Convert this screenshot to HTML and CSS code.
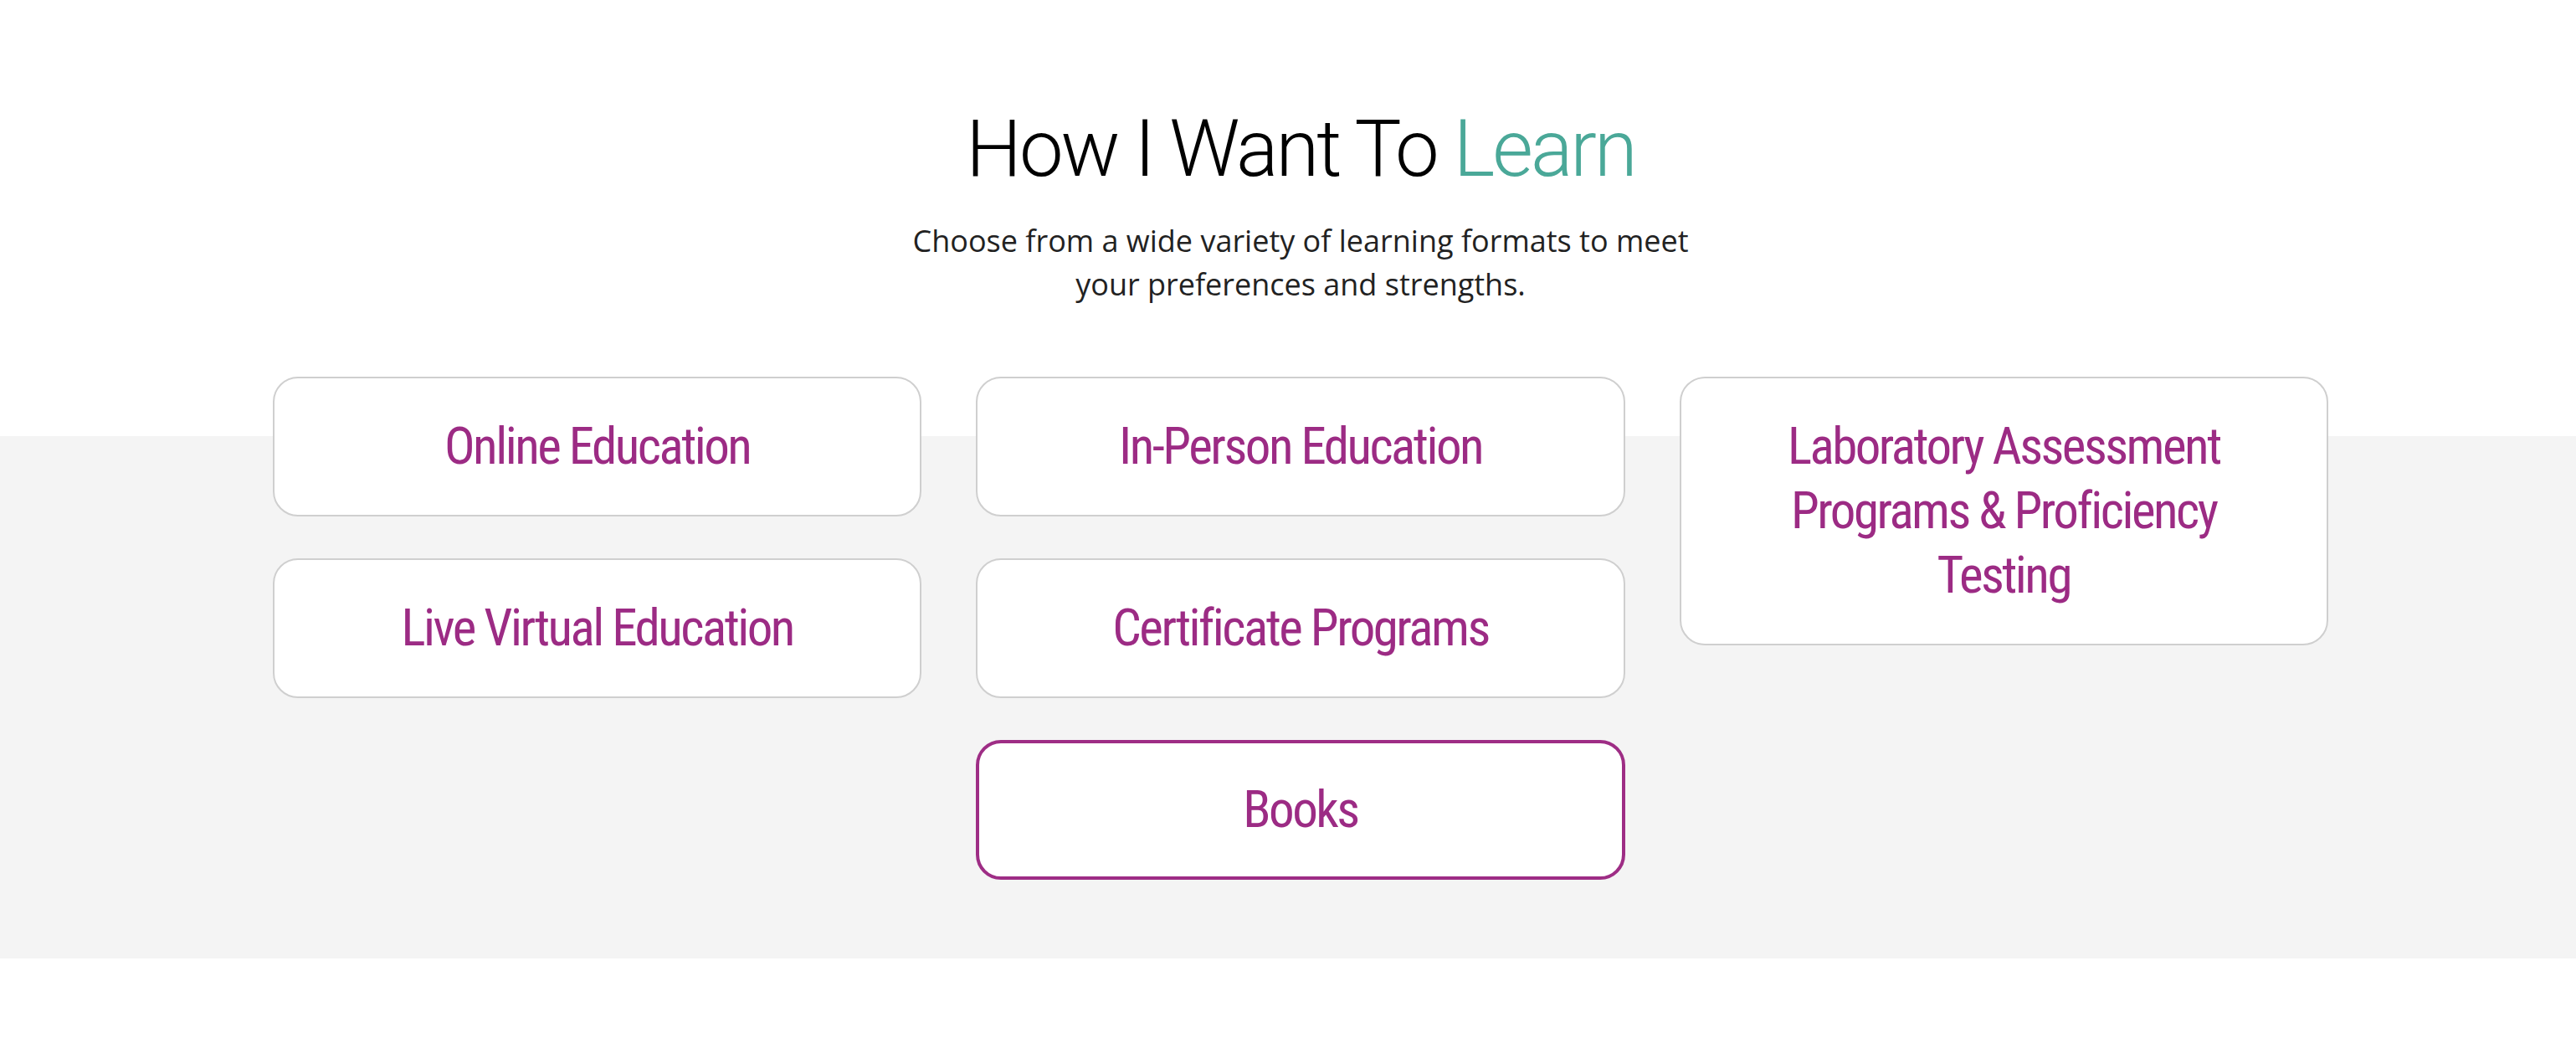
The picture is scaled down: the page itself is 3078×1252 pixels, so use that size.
FILE: index.html
```html
<!DOCTYPE html>
<html lang="en">
<head>
	<meta charset="UTF-8">
	<title>How I Want To Learn</title>
	<link rel="stylesheet" href="styles.css">
</head>
<body>
	<div id="learn">
		<div class="head">
			<h2 class="title">How I Want To <span>Learn</span></h2>
			<p class="intro">Choose from a wide variety of learning formats to meet<br>your preferences and strengths.</p>
		</div>
		<div class="band">
			<div class="grid">
				<div class="col">
					<a class="card" href="#">Online Education</a>
					<a class="card" href="#">Live Virtual Education</a>
				</div>
				<div class="col">
					<a class="card" href="#">In-Person Education</a>
					<a class="card" href="#">Certificate Programs</a>
					<a class="card active" href="#">Books</a>
				</div>
				<div class="col">
					<a class="card" href="#">Laboratory Assessment Programs &amp; Proficiency Testing</a>
				</div>
			</div>
		</div>
	</div>
</body>
</html>
```

FILE: styles.css
```css
*{
	margin: 0;
	padding: 0;
	box-sizing: border-box;
}
body{
	background: #fff;
}
#learn{
	padding-left: 30px;
	padding-bottom: 108px;
}
.head{
	padding-top: 122px;
	padding-bottom: 155px;
	text-align: center;
}
.title{
	font-family: Roboto, "Liberation Sans", sans-serif;
	font-weight: 300;
	font-size: 94px;
	line-height: 1.2;
	letter-spacing: -3px;
	color: #000;
}
.title span{
	color: #4aa898;
}
.intro{
	margin-top: 27px;
	font-family: "Open Sans", "Liberation Sans", sans-serif;
	font-size: 36px;
	line-height: 52px;
	color: #222;
}
.band{
	background: #f4f4f4;
	margin-left: -30px;
	padding-left: 30px;
	padding-bottom: 94px;
}
.grid{
	width: 2456px;
	margin: 0 auto;
	position: relative;
	top: -71px;
	margin-bottom: -71px;
	display: flex;
	gap: 65px;
	align-items: flex-start;
}
.col{
	flex: 1;
	display: flex;
	flex-direction: column;
	gap: 50px;
}
.card{
	display: block;
	background: #fff;
	border: 2px solid #cfcfcf;
	border-radius: 30px;
	padding: 43px 100px;
	text-align: center;
	text-decoration: none;
	font-family: Roboto, "Liberation Sans", sans-serif;
	font-stretch: 75%;
	font-size: 61px;
	line-height: 77px;
	letter-spacing: -2.5px;
	color: #9c2b84;
}
.card.active{
	border: 4px solid #9e2d85;
	padding: 41px 98px;
}
```
